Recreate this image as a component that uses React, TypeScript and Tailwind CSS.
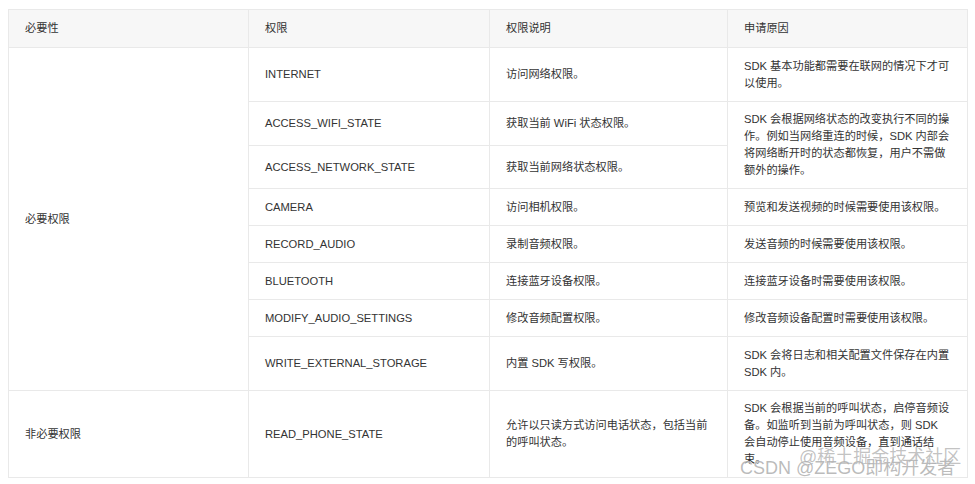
import React from "react";

const font = {
  fontFamily: '"Liberation Sans", "Noto Sans CJK SC", sans-serif',
};

type Cell = {
  content: React.ReactNode;
  col: string;
  row: string;
  header?: boolean;
};

const cells: Cell[] = [
  { content: "必要性", col: "col-start-1", row: "row-start-1", header: true },
  { content: "权限", col: "col-start-2", row: "row-start-1", header: true },
  { content: "权限说明", col: "col-start-3", row: "row-start-1", header: true },
  { content: "申请原因", col: "col-start-4", row: "row-start-1", header: true },

  { content: "必要权限", col: "col-start-1", row: "row-start-2 row-span-8" },

  { content: "INTERNET", col: "col-start-2", row: "row-start-2" },
  { content: "访问网络权限。", col: "col-start-3", row: "row-start-2" },
  {
    content: (
      <>
        SDK 基本功能都需要在联网的情况下才可
        <br />
        以使用。
      </>
    ),
    col: "col-start-4",
    row: "row-start-2",
  },

  { content: "ACCESS_WIFI_STATE", col: "col-start-2", row: "row-start-3" },
  { content: "获取当前 WiFi 状态权限。", col: "col-start-3", row: "row-start-3" },
  {
    content: (
      <>
        SDK 会根据网络状态的改变执行不同的操
        <br />
        作。例如当网络重连的时候，SDK 内部会
        <br />
        将网络断开时的状态都恢复，用户不需做
        <br />
        额外的操作。
      </>
    ),
    col: "col-start-4",
    row: "row-start-3 row-span-2",
  },

  { content: "ACCESS_NETWORK_STATE", col: "col-start-2", row: "row-start-4" },
  { content: "获取当前网络状态权限。", col: "col-start-3", row: "row-start-4" },

  { content: "CAMERA", col: "col-start-2", row: "row-start-5" },
  { content: "访问相机权限。", col: "col-start-3", row: "row-start-5" },
  { content: "预览和发送视频的时候需要使用该权限。", col: "col-start-4", row: "row-start-5" },

  { content: "RECORD_AUDIO", col: "col-start-2", row: "row-start-6" },
  { content: "录制音频权限。", col: "col-start-3", row: "row-start-6" },
  { content: "发送音频的时候需要使用该权限。", col: "col-start-4", row: "row-start-6" },

  { content: "BLUETOOTH", col: "col-start-2", row: "row-start-7" },
  { content: "连接蓝牙设备权限。", col: "col-start-3", row: "row-start-7" },
  { content: "连接蓝牙设备时需要使用该权限。", col: "col-start-4", row: "row-start-7" },

  { content: "MODIFY_AUDIO_SETTINGS", col: "col-start-2", row: "row-start-8" },
  { content: "修改音频配置权限。", col: "col-start-3", row: "row-start-8" },
  { content: "修改音频设备配置时需要使用该权限。", col: "col-start-4", row: "row-start-8" },

  { content: "WRITE_EXTERNAL_STORAGE", col: "col-start-2", row: "row-start-9" },
  { content: "内置 SDK 写权限。", col: "col-start-3", row: "row-start-9" },
  {
    content: (
      <>
        SDK 会将日志和相关配置文件保存在内置
        <br />
        SDK 内。
      </>
    ),
    col: "col-start-4",
    row: "row-start-9",
  },

  { content: "非必要权限", col: "col-start-1", row: "row-start-10" },
  { content: "READ_PHONE_STATE", col: "col-start-2", row: "row-start-10" },
  {
    content: (
      <>
        允许以只读方式访问电话状态，包括当前
        <br />
        的呼叫状态。
      </>
    ),
    col: "col-start-3",
    row: "row-start-10",
  },
  {
    content: (
      <>
        SDK 会根据当前的呼叫状态，启停音频设
        <br />
        备。如监听到当前为呼叫状态，则 SDK
        <br />
        会自动停止使用音频设备，直到通话结
        <br />
        束。
      </>
    ),
    col: "col-start-4",
    row: "row-start-10",
  },
];

export default function App() {
  return (
    <div className="w-[975px] h-[484px] bg-white overflow-hidden" style={font}>
      <div className="pl-[8px] pt-[9px]">
        <div className="relative w-[960px]">
          <div className="grid grid-cols-[240px_241px_238px_240px] grid-rows-[38px_54px_44px_43px_37px_37px_37px_37px_54px_87px] border-l border-t border-[#e9e9e9] text-[11.2px] leading-[16.8px] text-[#333333]">
            {cells.map((c, i) => (
              <div
                key={i}
                className={`${c.col} ${c.row} flex items-center px-4 border-r border-b border-[#e9e9e9] whitespace-nowrap ${
                  c.header ? "bg-[#f7f7f7]" : "bg-white"
                }`}
              >
                <div>{c.content}</div>
              </div>
            ))}
          </div>
          <div
            className="absolute left-[791px] top-[438px] text-[18px] leading-[20px] text-[rgba(120,120,120,0.45)] whitespace-nowrap pointer-events-none"
            style={{ textShadow: "0 0 1px rgba(255,255,255,0.9)" }}
          >
            @稀土掘金技术社区
          </div>
          <div
            className="absolute left-[732px] top-[449px] text-[18px] leading-[20px] text-[rgba(120,120,120,0.5)] whitespace-nowrap pointer-events-none"
            style={{ textShadow: "0 0 1px rgba(255,255,255,0.9)" }}
          >
            CSDN @ZEGO即构开发者
          </div>
        </div>
      </div>
    </div>
  );
}
